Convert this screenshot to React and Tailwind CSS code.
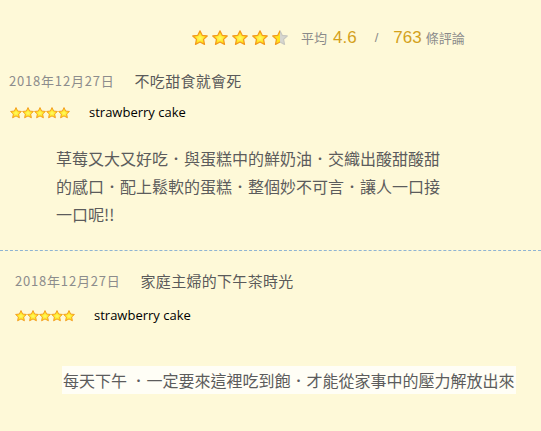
import React from "react";

const STAR = "M12 2.2l2.9 6.1 6.7.8-4.9 4.6 1.3 6.6L12 17l-6 3.3 1.3-6.6L2.4 9.1l6.7-.8z";

function Star({ size = 16, half = false }) {
  return (
    <svg width={size} height={size} viewBox="1.4 1.2 21.2 21.2" className="block shrink-0">
      <defs>
        <radialGradient id="sg" cx="50%" cy="55%" r="55%">
          <stop offset="0%" stopColor="#fffb6a" />
          <stop offset="60%" stopColor="#ffe31a" />
          <stop offset="100%" stopColor="#ffc400" />
        </radialGradient>
        <linearGradient id="hg" x1="0" x2="1" y1="0" y2="0">
          <stop offset="50%" stopColor="#ffe31a" />
          <stop offset="50%" stopColor="#d6d6d0" />
        </linearGradient>
        <linearGradient id="hs" x1="0" x2="1" y1="0" y2="0">
          <stop offset="50%" stopColor="#f39a1e" />
          <stop offset="50%" stopColor="#c8c8c0" />
        </linearGradient>
      </defs>
      <path
        d={STAR}
        fill={half ? "url(#hg)" : "url(#sg)"}
        stroke={half ? "url(#hs)" : "#f39a1e"}
        strokeWidth="1.6"
        strokeLinejoin="round"
      />
    </svg>
  );
}

const cjk = "font-['Noto_Sans_CJK_TC','Noto_Sans',sans-serif]";

function Review({ date, title, lines, dateCls, starsCls, paraCls, lineCls }) {
  return (
    <div>
      <div className={`flex items-center h-[18px] ${dateCls}`}>
        <span className={`${cjk} text-[13px] tracking-[0.8px] text-[#8c8c8c]`}>{date}</span>
        <span className={`${cjk} text-[15px] text-[#5a5a5a] ml-[20px] tracking-[0.3px]`}>{title}</span>
      </div>
      <div className={`flex items-center h-[16px] ${starsCls}`}>
        <div className="flex">
          {[0, 1, 2, 3, 4].map((i) => (
            <Star key={i} size={12} />
          ))}
        </div>
        <span className="font-['Open_Sans',sans-serif] text-[13px] text-black ml-[19px]">strawberry cake</span>
      </div>
      <div className={`${cjk} text-[16px] leading-[28px] text-[#5c5c5c] whitespace-nowrap ${paraCls}`}>
        {lines.map((l, i) => (
          <div key={i} className={lineCls}>{l}</div>
        ))}
      </div>
    </div>
  );
}

export default function App() {
  return (
    <div className="w-[541px] h-[431px] bg-[#fef9d8] overflow-hidden">
      <div className="flex items-center h-[20px] mt-[28px] pl-[192px]">
        <div className="flex gap-[4px]">
          <Star />
          <Star />
          <Star />
          <Star />
          <Star half />
        </div>
        <span className={`${cjk} text-[13px] text-[#8a8a8a] ml-[13px]`}>平均</span>
        <span className="font-['Liberation_Sans',sans-serif] text-[17px] text-[#d4a11b] ml-[6px]">4.6</span>
        <span className="font-['Liberation_Sans',sans-serif] text-[13px] text-[#8a8a8a] ml-[18px]">/</span>
        <span className="font-['Liberation_Sans',sans-serif] text-[17px] text-[#d4a11b] ml-[15px]">763</span>
        <span className={`${cjk} text-[13px] text-[#8a8a8a] ml-[4px]`}>條評論</span>
      </div>

      <div className="mt-[24px]">
        <Review
          date="2018年12月27日"
          title="不吃甜食就會死"
          dateCls="pl-[9px]"
          starsCls="mt-[15px] pl-[10px]"
          paraCls="mt-[23px] pl-[56px]"
          lines={[
            "草莓又大又好吃．與蛋糕中的鮮奶油．交織出酸甜酸甜",
            "的感口．配上鬆軟的蛋糕．整個妙不可言．讓人一口接",
            "一口呢!!",
          ]}
        />
      </div>

      <div className="mt-[22px] border-t border-dashed border-[#8fb4d2]" />

      <div className="mt-[21px]">
        <Review
          date="2018年12月27日"
          title="家庭主婦的下午茶時光"
          dateCls="pl-[15px]"
          starsCls="mt-[18px] pl-[15px]"
          paraCls="mt-[42px] pl-[62px]"
          lineCls="inline-block bg-[#fffef6] px-[1px]"
          lines={["每天下午 ．一定要來這裡吃到飽．才能從家事中的壓力解放出來"]}
        />
      </div>
    </div>
  );
}
